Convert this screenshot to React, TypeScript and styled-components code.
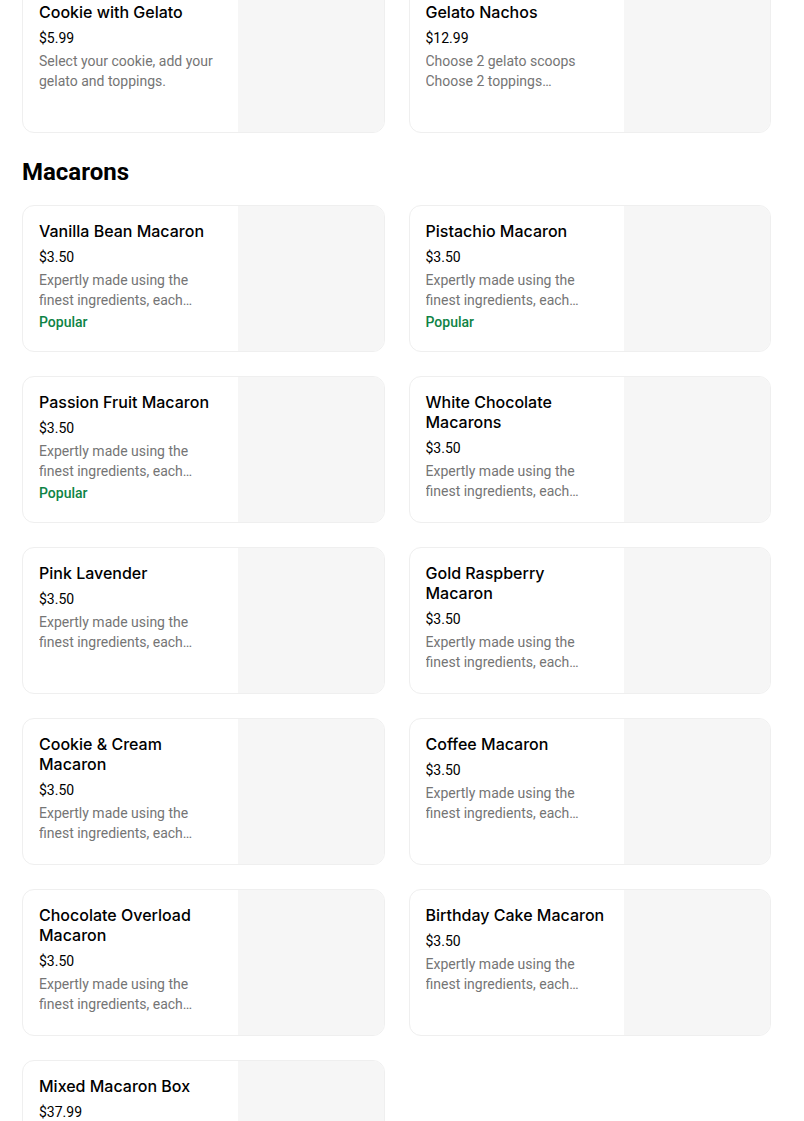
import * as React from 'react'
import styled, { createGlobalStyle } from 'styled-components'

const GlobalStyle = createGlobalStyle`
  html, body {
    margin: 0;
    padding: 0;
    background: #ffffff;
    overflow: hidden;
  }
  body {
    font-family: Roboto, "Noto Sans", Arial, sans-serif;
    color: #000000;
    -webkit-font-smoothing: antialiased;
  }
`

const Page = styled.div`
  padding: 0 33px 0 22px;
  margin-top: -14px;
`

const Grid = styled.ul`
  list-style: none;
  margin: 0;
  padding: 0;
  display: grid;
  grid-template-columns: 1fr 1fr;
  gap: 24px;
`

const SectionTitle = styled.h3`
  margin: 23px 0 17px;
  font-size: 24px;
  line-height: 32px;
  font-weight: 700;
`

const Card = styled.li`
  display: flex;
  height: 147px;
  box-sizing: border-box;
  border: 1px solid #efefef;
  border-radius: 12px;
  overflow: hidden;
  background: #ffffff;
`

const Info = styled.div`
  flex: 1;
  min-width: 0;
  padding: 15px 16px 0 16px;
  display: flex;
  flex-direction: column;
`

const Title = styled.div`
  font-family: Inter, Roboto, sans-serif;
  font-size: 16px;
  line-height: 20px;
  font-weight: 500;
  color: #000000;
`

const Price = styled.div`
  margin-top: 6px;
  font-size: 14px;
  line-height: 20px;
  color: #000000;
`

const Desc = styled.div`
  margin-top: 3px;
  font-size: 14px;
  line-height: 20px;
  color: #757575;
  display: -webkit-box;
  -webkit-line-clamp: 2;
  -webkit-box-orient: vertical;
  overflow: hidden;
`

const Badge = styled.div`
  margin-top: 2px;
  font-size: 14px;
  line-height: 20px;
  font-weight: 500;
  color: #0e8345;
`

const Thumb = styled.div`
  width: 146px;
  flex-shrink: 0;
  background: #f6f6f6;
`

type Item = {
  name: string
  price: string
  desc: string
  popular?: boolean
}

const DESC = 'Expertly made using the finest ingredients, each macaron is a delicate treat crafted with care.'

const treats: Item[] = [
  { name: 'Cookie with Gelato', price: '$5.99', desc: 'Select your cookie, add your gelato and toppings.' },
  { name: 'Gelato Nachos', price: '$12.99', desc: 'Choose 2 gelato scoops\nChoose 2 toppings\nChoose a drizzle' },
]

const macarons: Item[] = [
  { name: 'Vanilla Bean Macaron', price: '$3.50', desc: DESC, popular: true },
  { name: 'Pistachio Macaron', price: '$3.50', desc: DESC, popular: true },
  { name: 'Passion Fruit Macaron', price: '$3.50', desc: DESC, popular: true },
  { name: 'White Chocolate Macarons', price: '$3.50', desc: DESC },
  { name: 'Pink Lavender', price: '$3.50', desc: DESC },
  { name: 'Gold Raspberry Macaron', price: '$3.50', desc: DESC },
  { name: 'Cookie & Cream Macaron', price: '$3.50', desc: DESC },
  { name: 'Coffee Macaron', price: '$3.50', desc: DESC },
  { name: 'Chocolate Overload Macaron', price: '$3.50', desc: DESC },
  { name: 'Birthday Cake Macaron', price: '$3.50', desc: DESC },
  { name: 'Mixed Macaron Box', price: '$37.99', desc: 'A colourful assortment of our signature macarons.' },
]

const MenuCard: React.FC<{ item: Item }> = ({ item }) => (
  <Card>
    <Info>
      <Title>{item.name}</Title>
      <Price>{item.price}</Price>
      <Desc>
        {item.desc.split('\n').map((line, i) => (
          <React.Fragment key={i}>
            {i > 0 && <br />}
            {line}
          </React.Fragment>
        ))}
      </Desc>
      {item.popular && <Badge>Popular</Badge>}
    </Info>
    <Thumb />
  </Card>
)

export default function App() {
  return (
    <Page>
      <GlobalStyle />
      <Grid>
        {treats.map((t) => (
          <MenuCard key={t.name} item={t} />
        ))}
      </Grid>
      <SectionTitle>Macarons</SectionTitle>
      <Grid>
        {macarons.map((m) => (
          <MenuCard key={m.name} item={m} />
        ))}
      </Grid>
    </Page>
  )
}
